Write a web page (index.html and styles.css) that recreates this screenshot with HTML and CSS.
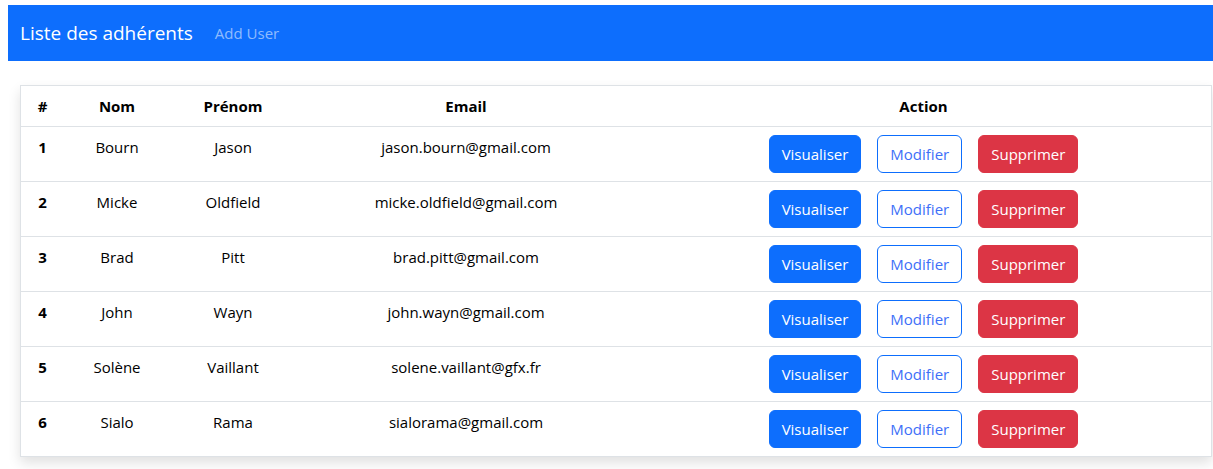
FILE: index.html
```html
<!DOCTYPE html>
<html lang="fr">
<head>
<meta charset="utf-8">
<title>Liste des adhérents</title>
<link rel="stylesheet" href="styles.css">
</head>
<body>
<nav class="navbar">
  <span class="brand">Liste des adhérents</span>
  <a class="nav-link" href="#">Add User</a>
</nav>
<main class="page">
  <div class="card">
    <table class="table">
      <colgroup>
        <col class="c-id"><col class="c-nom"><col class="c-prenom"><col class="c-email"><col class="c-action">
      </colgroup>
      <thead>
        <tr><th>#</th><th>Nom</th><th>Prénom</th><th>Email</th><th>Action</th></tr>
      </thead>
      <tbody>
        <tr><th>1</th><td>Bourn</td><td>Jason</td><td>jason.bourn@gmail.com</td><td><div class="actions"><a class="btn btn-primary">Visualiser</a><a class="btn btn-outline">Modifier</a><a class="btn btn-danger">Supprimer</a></div></td></tr>
        <tr><th>2</th><td>Micke</td><td>Oldfield</td><td>micke.oldfield@gmail.com</td><td><div class="actions"><a class="btn btn-primary">Visualiser</a><a class="btn btn-outline">Modifier</a><a class="btn btn-danger">Supprimer</a></div></td></tr>
        <tr><th>3</th><td>Brad</td><td>Pitt</td><td>brad.pitt@gmail.com</td><td><div class="actions"><a class="btn btn-primary">Visualiser</a><a class="btn btn-outline">Modifier</a><a class="btn btn-danger">Supprimer</a></div></td></tr>
        <tr><th>4</th><td>John</td><td>Wayn</td><td>john.wayn@gmail.com</td><td><div class="actions"><a class="btn btn-primary">Visualiser</a><a class="btn btn-outline">Modifier</a><a class="btn btn-danger">Supprimer</a></div></td></tr>
        <tr><th>5</th><td>Solène</td><td>Vaillant</td><td>solene.vaillant@gfx.fr</td><td><div class="actions"><a class="btn btn-primary">Visualiser</a><a class="btn btn-outline">Modifier</a><a class="btn btn-danger">Supprimer</a></div></td></tr>
        <tr><th>6</th><td>Sialo</td><td>Rama</td><td>sialorama@gmail.com</td><td><div class="actions"><a class="btn btn-primary">Visualiser</a><a class="btn btn-outline">Modifier</a><a class="btn btn-danger">Supprimer</a></div></td></tr>
      </tbody>
    </table>
  </div>
</main>
</body>
</html>
```
FILE: styles.css
```css
* { box-sizing: border-box; }
html, body { margin: 0; padding: 0; }
body {
  margin: 5px 0 0 8px;
  font-family: "Open Sans", "Noto Sans", sans-serif;
  font-size: 15px;
  line-height: 24px;
  color: #212529;
  background: #fff;
}
.navbar {
  display: flex;
  align-items: center;
  height: 56px;
  padding: 8px 12px;
  background: #0d6efd;
}
.brand {
  color: #fff;
  font-size: 19px;
  line-height: 30px;
  margin-right: 14px;
}
.nav-link {
  color: rgba(255,255,255,.55);
  text-decoration: none;
  font-size: 15px;
  padding: 8px;
}
.page {
  padding: 24px 1px 16px 12px;
}
.card {
  border: 1px solid #dee2e6;
  background: #fff;
  box-shadow: 0 6px 12px rgba(0,0,0,.12);
}
.table {
  width: 100%;
  border-collapse: collapse;
  table-layout: fixed;
  vertical-align: top;
}
.c-id { width: 43px; }
.c-nom { width: 106px; }
.c-prenom { width: 126px; }
.c-email { width: 340px; }
.table th, .table td {
  padding: 8px;
  text-align: center;
  vertical-align: top;
  border-bottom: 1px solid #dee2e6;
  white-space: nowrap;
}
.table tbody tr:last-child th, .table tbody tr:last-child td { border-bottom: 0; }
.table th { font-weight: 700; color: #000; }
.table td { color: #000; font-weight: 400; }
.actions {
  display: flex;
  justify-content: center;
  gap: 16px;
}
.btn {
  display: inline-block;
  height: 38px;
  padding: 6px 12px;
  border: 1px solid transparent;
  border-radius: 6px;
  font-size: 15px;
  line-height: 24px;
  text-decoration: none;
}
.btn-primary { background: #0d6efd; border-color: #0d6efd; color: #fff; }
.btn-outline { background: #fff; border-color: #0d6efd; color: #3d6ff8; }
.btn-danger { background: #dc3545; border-color: #dc3545; color: #fff; }
```
